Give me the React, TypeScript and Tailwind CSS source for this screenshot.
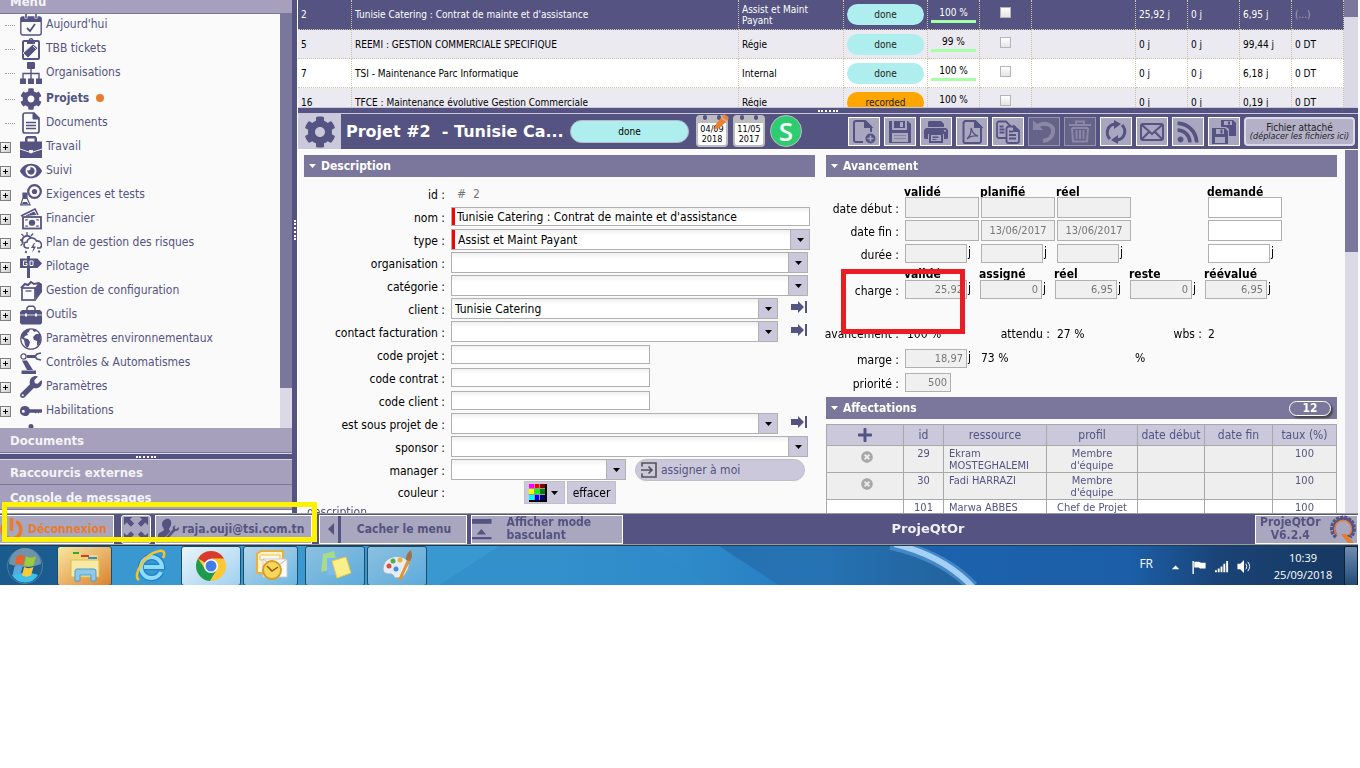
import React from 'react';
import { FaEye, FaWrench, FaPowerOff, FaPlus, FaCog, FaRss, FaTimesCircle } from 'react-icons/fa';

type IconProps = { className?: string };

/* ---------- ICONS ---------- */

const CalendarCheckIcon = ({ className }: IconProps) => (
    <svg viewBox="0 0 22 22" className={className} fill="none" stroke="currentColor">
        <rect x="0.8" y="3" width="20.4" height="18" rx="2" strokeWidth="1.4" />
        <path d="M1 3h20v5H1z" fill="currentColor" stroke="none" />
        <path d="M6 0.5v4M16 0.5v4" strokeWidth="3" stroke="#fafafa" />
        <path d="M6 0v4M16 0v4" strokeWidth="1.6" />
        <path d="M7 14l3 3 5-7" strokeWidth="1.8" />
    </svg>
);

const TicketBoardIcon = ({ className }: IconProps) => (
    <svg viewBox="0 0 22 22" className={className} fill="none" stroke="currentColor">
        <rect x="3" y="3" width="16" height="18" rx="1" strokeWidth="2" />
        <circle cx="11" cy="2.5" r="1.8" strokeWidth="1.4" />
        <path d="M7 3h8v3H7z" fill="currentColor" stroke="none" />
        <path d="M3 15L13 6l5 4-10 10z" fill="currentColor" stroke="#fafafa" strokeWidth="0.8" />
        <path d="M13 8l3 3" stroke="#fafafa" strokeWidth="0.8" />
    </svg>
);

const SitemapIcon = ({ className }: IconProps) => (
    <svg viewBox="0 0 22 22" className={className} fill="none" stroke="currentColor">
        <rect x="7" y="0" width="8" height="7" rx="1" fill="currentColor" stroke="none" />
        <path d="M11 6v11M3 17v-5.500h16V17" strokeWidth="1.400" />
        <path d="M0 16.500h6V22H0zM8 16.500h6V22H8zM16 16.500h6V22h-6z" fill="currentColor" stroke="none" />
    </svg>
);

const DocumentIcon = ({ className }: IconProps) => (
    <svg viewBox="0 0 22 22" className={className} fill="none" stroke="currentColor">
        <path d="M5 1h9l5 5v13a2 2 0 0 1-2 2H5a2 2 0 0 1-2-2V3a2 2 0 0 1 2-2z" strokeWidth="1.700" />
        <path d="M13 1v6h6z" fill="currentColor" />
        <path d="M6 10.500h10M6 13.500h10M6 16.500h10" strokeWidth="1.300" />
    </svg>
);

const BriefcaseIcon = ({ className }: IconProps) => (
    <svg viewBox="0 0 22 22" className={className} fill="currentColor">
        <path d="M5 6V2l1.500-2h9L17 2v4h-2.500V2.500h-7V6z" />
        <path d="M0 5.500h22v7l-9 3V14H9v1.500l-9-3z" />
        <path d="M0 13.500l8.500 2.700L11 17.500l2.500-1.300L22 13.500V22H0z" />
    </svg>
);

const TestsIcon = ({ className }: IconProps) => (
    <svg viewBox="0 0 22 22" className={className} fill="none" stroke="currentColor">
        <circle cx="14.500" cy="7.500" r="6.300" strokeWidth="2.200" />
        <circle cx="14.500" cy="7.500" r="2.600" fill="currentColor" stroke="none" />
        <path d="M3 9h4v5l3 6.800H0.700L3 14z" strokeWidth="1.200" fill="#fafafa" />
        <path d="M3 9h4v6H3zM3 18h4l1 2H2z" fill="currentColor" stroke="none" />
    </svg>
);

const MoneyIcon = ({ className }: IconProps) => (
    <svg viewBox="0 0 22 22" className={className} fill="none" stroke="currentColor">
        <path d="M1 8L15 1l3 6" strokeWidth="1.600" />
        <path d="M6 8l8-4 2 3" fill="currentColor" strokeWidth="1" />
        <rect x="3" y="9" width="18" height="11.500" strokeWidth="1.800" />
        <ellipse cx="12" cy="14.800" rx="3.200" ry="3" fill="currentColor" stroke="none" />
        <path d="M5 12h2v-1M19 12h-2v-1M5 18h2v1M19 18h-2v1" strokeWidth="1.200" />
    </svg>
);

const WeatherIcon = ({ className }: IconProps) => (
    <svg viewBox="0 0 22 22" className={className} fill="none" stroke="currentColor">
        <path d="M3 11.500A4.500 4.500 0 1 1 11 6" strokeWidth="2" />
        <path d="M7 3V0M3.500 4L1.500 2M11 4l2-2.500M2 8H0M2.500 12l-2 1.500" strokeWidth="1.300" />
        <path d="M9 16H7a3 3 0 0 1 0-6 5 5 0 0 1 9.500-1A4 4 0 0 1 20 16h-3" strokeWidth="1.600" />
        <path d="M14 11l-3 5h2.500L12 21l4-6.500h-2.500L15 11z" fill="currentColor" stroke="none" />
        <path d="M6.500 19l-1 2M19.500 18.500l-1 2" strokeWidth="1.800" />
    </svg>
);

const SignpostIcon = ({ className }: IconProps) => (
    <svg viewBox="0 0 22 22" className={className} fill="none" stroke="currentColor">
        <path d="M8.500 0v22" strokeWidth="3" />
        <path d="M0 2.500h17.500L22 7.500l-4.500 4.500H0z" fill="currentColor" stroke="none" />
        <path d="M7 5H3.500v4.500H7V7.500H5.500M10 5h3v4.500h-3z" stroke="#fafafa" strokeWidth="1" />
    </svg>
);

const BoxIcon = ({ className }: IconProps) => (
    <svg viewBox="0 0 22 22" className={className} fill="none" stroke="currentColor">
        <path d="M15 8l4-6 3 2v8l-6 8z" fill="currentColor" stroke="none" />
        <path d="M1 8l4-4 3 1 3-3 3 2 5-1" strokeWidth="2" />
        <rect x="2" y="8" width="13" height="12" strokeWidth="1.700" />
        <path d="M5.500 11h6" strokeWidth="1.300" />
    </svg>
);

const ToolboxIcon = ({ className }: IconProps) => (
    <svg viewBox="0 0 22 22" className={className} fill="none" stroke="currentColor">
        <path d="M7 6V4l1.500-1.700h5L15 4v2" strokeWidth="1.500" />
        <path d="M2 6h18l2 2v11l-1.500 1.500h-19L0 19V8z" fill="currentColor" stroke="none" />
        <path d="M0 11h22" stroke="#fafafa" strokeWidth="0.800" />
        <path d="M6 9.500v3M16 9.500v3" stroke="#fafafa" strokeWidth="2" />
    </svg>
);

const GlobeIcon = ({ className }: IconProps) => (
    <svg viewBox="0 0 22 22" className={className} fill="none" stroke="currentColor">
        <circle cx="11" cy="11" r="10.200" strokeWidth="1.200" />
        <path d="M2 6l4-4 4-1-1 3-2 1 1 2-3 1-1 2 4 1 2 3-1 4-2 2-2-3-1-5-3-2zM13 1l4 1-2 2-2-1zM20 6l-4 0-3 3 1 3 3 1 0 4 1 1 3-5z" fill="currentColor" stroke="none" />
    </svg>
);

const RobotArmIcon = ({ className }: IconProps) => (
    <svg viewBox="0 0 22 22" className={className} fill="none" stroke="currentColor">
        <circle cx="3.500" cy="4.500" r="2.600" strokeWidth="1.300" />
        <path d="M7 4.500h9" strokeWidth="3" />
        <path d="M21 1l-4 1-2 2.500L17 7l4 1" strokeWidth="1.700" />
        <path d="M2 8.500h5L13 18H7z" fill="currentColor" stroke="none" />
        <path d="M1.500 22v-3.500H16V22z" fill="currentColor" stroke="none" />
    </svg>
);

const KeyIcon = ({ className }: IconProps) => (
    <svg viewBox="0 0 22 22" className={className} fill="currentColor">
        <path fillRule="evenodd" d="M5 6a5 5 0 0 1 4.700 3.300H22V12l-1 1-1.500-.5-1 1-1.500-1-1.500 1-1-.8H9.700A5 5 0 1 1 5 6zM3.300 9.700a1.500 1.500 0 1 0 0 3 1.500 1.500 0 0 0 0-3z" />
    </svg>
);

const PersonIcon = ({ className }: IconProps) => (
    <svg viewBox="0 0 22 22" className={className} fill="currentColor">
        <circle cx="11" cy="2.500" r="2.500" />
        <circle cx="16" cy="6" r="2" />
    </svg>
);

const GotoIcon = ({ className }: IconProps) => (
    <svg viewBox="0 0 16 14" className={className} fill="currentColor">
        <path d="M0 4h7V1l6 6-6 6v-3H0zM14 1h2v12h-2z" />
    </svg>
);

const NewFileIcon = ({ className }: IconProps) => (
    <svg viewBox="0 0 24 24" className={className} fill="none" stroke="currentColor" strokeWidth="2">
        <path d="M11 22H4a2 2 0 0 1-2-2V3a2 2 0 0 1 2-2h9l6 6v5" />
        <path d="M13 1v6h6z" fill="currentColor" />
        <circle cx="18.500" cy="18.500" r="5" fill="currentColor" stroke="none" />
        <path d="M15.500 18.500h6M18.500 15.500v6" stroke="#a9a6bf" strokeWidth="1.600" />
    </svg>
);

const SaveIcon = ({ className }: IconProps) => (
    <svg viewBox="0 0 24 24" className={className} fill="currentColor">
        <path fillRule="evenodd" d="M1 1h3v9h15V1h1l3 3v19H1zM4 13v9h16v-9z" />
        <path fillRule="evenodd" d="M6 1h11v7H6zM12 2v5h3V2z" />
        <path d="M6 15h12v1H6zM6 18h12v1H6z" opacity="0.400" />
    </svg>
);

const PrintIcon = ({ className }: IconProps) => (
    <svg viewBox="0 0 24 24" className={className} fill="currentColor">
        <path fillRule="evenodd" d="M5 1h12l3 3v3H4V2z" />
        <path fillRule="evenodd" d="M2 8h20l2 2v8l-1 1h-3v-5H4v5H1l-1-1v-8zM20 10v1.500h2V10z" />
        <path fillRule="evenodd" d="M5 13h14v10H5zM7 15v6h10v-6z" />
        <path d="M8.500 16.500h6V18h-6zM8.500 19h4v1h-4z" />
    </svg>
);

const PdfIcon = ({ className }: IconProps) => (
    <svg viewBox="0 0 24 24" className={className} fill="none" stroke="currentColor" strokeWidth="2">
        <path d="M5 1h10l6 6v14a2 2 0 0 1-2 2H5a1.500 1.500 0 0 1-1.500-2V2.500z" />
        <path d="M15 1v6h6z" fill="currentColor" />
        <path d="M11 8c1.500 5 3 7 7 8-4-.5-8 0-11 3 3-3 4.500-7 4-11z" strokeWidth="1.300" />
    </svg>
);

const CopyIcon = ({ className }: IconProps) => (
    <svg viewBox="0 0 24 24" className={className} fill="none" stroke="currentColor" strokeWidth="1.800">
        <path d="M3 1.500h7l4 4V18H3a2 2 0 0 1-2-2V3.500a2 2 0 0 1 2-2z" />
        <path d="M3.500 6.500h4M3.500 9.500h5M3.500 12.500h5" />
        <path d="M12 6.500h6.500L23 11v10a2 2 0 0 1-2 2h-8.500a2 2 0 0 1-2-2V8z" fill="#a9a6bf" />
        <path d="M18 6.500V11h5z" fill="currentColor" />
        <path d="M13 11.500h4M13 15h7M13 18.500h7" />
    </svg>
);

const UndoIcon = ({ className }: IconProps) => (
    <svg viewBox="0 0 24 24" className={className} fill="none" stroke="currentColor">
        <path d="M5 6c8-5 17-1 16 6-.5 5-4 8-10 9" strokeWidth="4" />
        <path d="M1 0v10h10z" fill="currentColor" stroke="none" />
    </svg>
);

const TrashIcon = ({ className }: IconProps) => (
    <svg viewBox="0 0 24 24" className={className} fill="none" stroke="currentColor" strokeWidth="2">
        <path d="M1 5h22M8 4V1.500h8V4M4 8l1 13.500h14L20 8M4 8h16M8.500 10v9M12 10v9M15.500 10v9" />
    </svg>
);

const RefreshIcon = ({ className }: IconProps) => (
    <svg viewBox="0 0 24 24" className={className} fill="none" stroke="currentColor" strokeWidth="3">
        <path d="M6 19C1 14 3 5 11 4M18 5c5 5 3 14-5 15" />
        <path d="M10 0l7 4-7 5zM14 15v9l-7-4z" fill="currentColor" stroke="none" />
    </svg>
);

const MailIcon = ({ className }: IconProps) => (
    <svg viewBox="0 0 24 24" className={className} fill="none" stroke="currentColor" strokeWidth="2">
        <rect x="1" y="4" width="22" height="16" rx="2" />
        <path d="M2 5l10 9 10-9M2 19l7-7M22 19l-7-7" />
    </svg>
);

const MultiSaveIcon = ({ className }: IconProps) => (
    <svg viewBox="0 0 24 24" className={className} fill="currentColor">
        <path fillRule="evenodd" d="M9 0h12l3 3v13h-7V9l-3-2H9zM12 1v4h8V1zM16 1.500h2v3h-2z" />
        <path fillRule="evenodd" d="M0 8h13l3 3v13H0zM4 9v5h8V9zM3 17v6h10v-6zM8.500 9.500h2v4h-2z" />
    </svg>
);

const ExpandIcon = ({ className }: IconProps) => (
    <svg viewBox="0 0 28 28" className={className} fill="currentColor">
        <path d="M1 1h9L7.500 3.500 12 8 8.500 11.500 4 7 1 10zM27 1v9l-3-3-4.500 4.500L16 8l4.500-4.500L18 1zM1 27v-9l3 3 4.500-4.500L12 20l-4.500 4.500L10 27zM27 27h-9l2.500-2.500L16 20l3.500-3.500L24 21l3-3z" />
    </svg>
);

const UserWrenchIcon = ({ className }: IconProps) => (
    <svg viewBox="0 0 22 22" className={className} fill="currentColor">
        <path d="M8 1c4-1 6 2 5 6-.5 2-2 3-2 5l2 1-5 8H0v-4c1-3 4-3 6-5 0-2-2-3-2-6 0-3 2-4 4-5z" />
        <path d="M20 9l-2 2-1-1 1-3c-3 0-4 2-3.500 4L9 18c-2 0-2 2-1 3.500 1.500 1 3 0 3-1.500l6-6.500c3 0 4.500-1.500 4.500-4.500z" stroke="#a9a6bf" strokeWidth="0.800" />
    </svg>
);

const AssignIcon = ({ className }: IconProps) => (
    <svg viewBox="0 0 16 16" className={className} fill="none" stroke="#545454" strokeWidth="1.600">
        <path d="M1 4.500V1h14v14H1v-3.500M0 8h10.500M7.500 4.500L11 8l-3.500 3.500" />
    </svg>
);

/* ---------- SIDEBAR ---------- */

const menuItems = [
    { label: "Aujourd'hui", Icon: CalendarCheckIcon, leaf: true },
    { label: 'TBB tickets', Icon: TicketBoardIcon, leaf: true },
    { label: 'Organisations', Icon: SitemapIcon, leaf: true },
    { label: 'Projets', Icon: FaCog, leaf: true, active: true },
    { label: 'Documents', Icon: DocumentIcon, leaf: true },
    { label: 'Travail', Icon: BriefcaseIcon },
    { label: 'Suivi', Icon: FaEye },
    { label: 'Exigences et tests', Icon: TestsIcon },
    { label: 'Financier', Icon: MoneyIcon },
    { label: 'Plan de gestion des risques', Icon: WeatherIcon },
    { label: 'Pilotage', Icon: SignpostIcon },
    { label: 'Gestion de configuration', Icon: BoxIcon },
    { label: 'Outils', Icon: ToolboxIcon },
    { label: 'Paramètres environnementaux', Icon: GlobeIcon },
    { label: 'Contrôles & Automatismes', Icon: RobotArmIcon },
    { label: 'Paramètres', Icon: FaWrench },
    { label: 'Habilitations', Icon: KeyIcon },
];

const PaneTitle = ({ children }: { children: React.ReactNode }) => (
    <h2 className="h-[25px] shrink-0 border-b border-[#7b769c] bg-[#a6a0bc] pl-[10px] text-[13px] leading-[25px] font-bold text-[#f4f3f8]">
        {children}
    </h2>
);

const Sidebar = () => (
    <aside className="flex w-[292px] shrink-0 flex-col overflow-hidden">
        <div className="flex h-[14px] shrink-0 flex-col justify-end overflow-hidden">
            <PaneTitle>Menu</PaneTitle>
        </div>
        <div className="flex h-[414px] shrink-0 bg-[#fafafa]">
            <nav className="min-w-0 flex-1 overflow-hidden">
                {menuItems.map(({ label, Icon, leaf, active }) => (
                    <div key={label} className={`flex h-6 items-start text-[#545381] ${active ? 'mt-0.5' : ''}`}>
                        <span className="flex h-[22px] w-5 shrink-0 items-center">
                            {leaf ? (
                                <span className="ml-[5px] w-[10px] border-b border-dotted border-[#999999]" />
                            ) : (
                                <button aria-label={`Ouvrir ${label}`} className="flex h-[11px] w-[11px] items-center justify-center border border-[#808080] bg-gradient-to-br from-white to-[#cccccc] text-black">
                                    <svg viewBox="0 0 5 5" className="h-[5px] w-[5px]"><path d="M2 0h1v2h2v1H3v2H2V3H0V2h2z" /></svg>
                                </button>
                            )}
                        </span>
                        <Icon className="h-[22px] w-[22px] shrink-0" />
                        <a href="#" className={`ml-1 leading-[21px] whitespace-nowrap ${active ? 'font-bold' : ''}`}>{label}</a>
                        {active && <span className="mt-[6px] ml-[7px] h-2 w-2 rounded-full bg-[#e97b2c]" />}
                    </div>
                ))}
                <PersonIcon className="ml-5 h-[22px] w-[22px] text-[#545381]" />
            </nav>
            <div className="w-3 shrink-0 bg-[#dbd9e6]">
                <div className="h-[374px] bg-[#7b769c]" />
            </div>
        </div>
        <PaneTitle>Documents</PaneTitle>
        <div className="flex h-[7px] shrink-0 items-center justify-center border-y border-[#dbd9e6] bg-[#545381]">
            <span className="w-5 border-t-2 border-dotted border-white" />
        </div>
        <PaneTitle>Raccourcis externes</PaneTitle>
        <PaneTitle>Console de messages</PaneTitle>
    </aside>
);

/* ---------- PROJECT LIST ---------- */

const projects = [
    { id: 2, name: "Tunisie Catering : Contrat de mainte et d'assistance", type: 'Assist et Maint Payant', status: 'done', progress: 100, validated: '25,92 j', assigned: '0 j', real: '6,95 j', cost: '(...)', selected: true },
    { id: 5, name: 'REEMI : GESTION COMMERCIALE SPECIFIQUE', type: 'Régie', status: 'done', progress: 99, validated: '0 j', assigned: '0 j', real: '99,44 j', cost: '0 DT' },
    { id: 7, name: 'TSI - Maintenance Parc Informatique', type: 'Internal', status: 'done', progress: 100, validated: '0 j', assigned: '0 j', real: '6,18 j', cost: '0 DT' },
    { id: 16, name: 'TFCE : Maintenance évolutive Gestion Commerciale', type: 'Régie', status: 'recorded', progress: 100, validated: '0 j', assigned: '0 j', real: '0,19 j', cost: '0 DT' },
];

const cell = 'border-r border-b border-dotted border-[#cfc4a4] px-[3px] text-left';

const ProjectList = () => (
    <div className="flex h-[107px] shrink-0 overflow-hidden">
        <table className="min-w-0 flex-1 table-fixed border-separate border-spacing-0 text-[10px] leading-[11px]">
            <colgroup>
                <col className="w-[54px]" />
                <col />
                <col className="w-[105px]" />
                <col className="w-[84px]" />
                <col className="w-[52px]" />
                <col className="w-[52px]" />
                <col className="w-[104px]" />
                <col className="w-[52px]" />
                <col className="w-[52px]" />
                <col className="w-[52px]" />
                <col className="w-[52px]" />
            </colgroup>
            <tbody>
                {projects.map(p => (
                    <tr
                        key={p.id}
                        className={
                            p.selected
                                ? 'h-[30px] bg-[#545381] text-white'
                                : 'h-[29px] text-black odd:bg-white even:bg-[#ebeaf1]'
                        }
                    >
                        <td className={cell}>{p.id}</td>
                        <td className={cell}>{p.name}</td>
                        <td className={cell}>{p.type}</td>
                        <td className={cell}>
                            <span className={`block h-[21px] rounded-full text-center leading-[21px] text-[#222222] ${p.status === 'recorded' ? 'bg-[#ffa500]' : 'bg-[#afeeee]'}`}>
                                {p.status}
                            </span>
                        </td>
                        <td className={cell}>
                            <span className="block border-b-[3px] border-[#a6ffa6] pb-0.5 text-center">{p.progress} %</span>
                        </td>
                        <td className={`${cell} pb-1`}>
                            <input type="checkbox" aria-label={`Terminé ${p.id}`} className="mx-auto block h-[11px] w-[11px] appearance-none border border-[#b5b5b5] bg-gradient-to-b from-white to-[#e4e4e4]" />
                        </td>
                        <td className={cell} />
                        <td className={cell}>{p.validated}</td>
                        <td className={cell}>{p.assigned}</td>
                        <td className={cell}>{p.real}</td>
                        <td className={`${cell} ${p.selected ? 'text-[#a9a6bf]' : ''}`}>{p.cost}</td>
                    </tr>
                ))}
            </tbody>
        </table>
        <div className="w-[14px] shrink-0 bg-[#dbd9e6]">
            <div className="h-[17px] bg-[#7b769c]" />
        </div>
    </div>
);

/* ---------- TITLE BAR ---------- */

const tools = [
    { label: 'Nouveau', Icon: NewFileIcon },
    { label: 'Enregistrer', Icon: SaveIcon },
    { label: 'Imprimer', Icon: PrintIcon },
    { label: 'PDF', Icon: PdfIcon },
    { label: 'Copier', Icon: CopyIcon },
    { label: 'Annuler', Icon: UndoIcon, disabled: true },
    { label: 'Supprimer', Icon: TrashIcon, disabled: true },
    { label: 'Rafraîchir', Icon: RefreshIcon },
    { label: 'Email', Icon: MailIcon },
    { label: 'Abonnement', Icon: FaRss },
    { label: 'Mise à jour multiple', Icon: MultiSaveIcon },
];

const DateBadge = ({ day, year, edited }: { day: string; year: string; edited?: boolean }) => (
    <div className="relative mr-[5px] mb-0.5 h-8 w-8 shrink-0 rounded-[4px] border-2 border-t-8 border-[#bcbcc0] bg-white pt-px text-center text-[9px] leading-[10px] text-black">
        <span className="absolute -top-2 left-[5px] h-[5px] w-1 rounded-full bg-[#545381]" />
        <span className="absolute -top-2 right-[5px] h-[5px] w-1 rounded-full bg-[#545381]" />
        <div>{day}</div>
        <div>{year}</div>
        {edited && (
            <svg viewBox="0 0 16 16" className="absolute -top-[9px] -right-[3px] h-4 w-4" fill="#ee7f2d">
                <path d="M11 0l5 4-2 3-5-4zM8 4l5 4-7 6-5 2 2-6z" />
            </svg>
        )}
    </div>
);

const TitleBar = () => (
    <div className="flex h-9 shrink-0 items-center border-t border-[#cac8da] bg-[#545381]">
        <div className="flex h-9 w-[43px] shrink-0 items-center justify-center bg-[#cac8da]">
            <FaCog className="h-8 w-8 text-[#545381]" />
        </div>
        <h1 className="ml-[5px] w-[224px] shrink-0 font-[DejaVu_Sans,sans-serif] text-[16px] font-bold whitespace-pre text-white">Projet #2  - Tunisie Ca...</h1>
        <span className="mr-[7px] h-[23px] w-[119px] shrink-0 rounded-full border border-[#b8b8c8] bg-[#afeeee] text-center text-[10px] leading-[21px] text-black">done</span>
        <DateBadge day="04/09" year="2018" edited />
        <DateBadge day="11/05" year="2017" />
        <span className="mb-0.5 flex h-8 w-8 shrink-0 items-center justify-center rounded-full border border-[#bcbcc0] bg-[#2ecc71] font-[Open_Sans,sans-serif] text-[26px] leading-none font-semibold text-white">S</span>
        <div className="ml-auto flex gap-1">
            {tools.map(({ label, Icon, disabled }) => (
                <button
                    key={label}
                    title={label}
                    disabled={disabled}
                    className={`flex h-[29px] w-8 items-center justify-center border ${disabled ? 'border-[#9694ac] bg-[#656388] text-[#8a88a5]' : 'border-white bg-[#a9a6bf] text-[#545381]'}`}
                >
                    <Icon className="h-6 w-6" />
                </button>
            ))}
        </div>
        <button className="mr-[3px] ml-1 flex h-[29px] w-[111px] flex-col items-center justify-center rounded-[4px] border-2 border-[#dbd9e6] bg-[#b3b0c8] text-[10px] leading-[9px] whitespace-nowrap text-[#222222]">
            Fichier attaché
            <i className="text-[9px]">(déplacer les fichiers ici)</i>
        </button>
    </div>
);

/* ---------- FORM HELPERS ---------- */

const SectionTitle = ({ title, count }: { title: string; count?: number }) => (
    <h2 className="flex h-[22px] items-center bg-[#7b769c] pl-[5px] font-bold text-white">
        <svg viewBox="0 0 7 4" className="mr-[5px] h-1 w-[7px]" fill="white"><path d="M0 0h7L3.500 4z" /></svg>
        {title}
        {count !== undefined && (
            <span className="mr-[6px] ml-auto h-[15px] w-[42px] rounded-full border border-white text-center leading-[13px] shadow-[2px_2px_2px_#444444]">{count}</span>
        )}
    </h2>
);

const Row = ({ label, id, children }: { label: string; id?: string; children?: React.ReactNode }) => (
    <div className="flex h-[23px] items-center">
        <label htmlFor={id} className="w-[141px] shrink-0 pt-[3px] text-right">{label} :</label>
        <div className="ml-[6px] flex min-w-0 flex-1 items-center">{children}</div>
    </div>
);

const boxed = 'border border-[#b0b0b0] bg-gradient-to-b from-[#f0f0f0] via-white via-30% to-white';

const SelectBox = ({ id, value = '', required, className }: { id: string; value?: string; required?: boolean; className: string }) => (
    <div className={`flex h-[21px] ${boxed} ${className}`}>
        {required && <span className="w-[3px] shrink-0 bg-[#ff0000]" />}
        <select id={id} defaultValue={value} className="min-w-0 flex-1 appearance-none pl-[3px] outline-none">
            <option>{value}</option>
        </select>
        <span className="pointer-events-none flex w-[19px] shrink-0 items-center justify-center border-l border-[#b0b0b0] bg-[#cac8da]">
            <svg viewBox="0 0 7 4" className="h-1 w-[7px]"><path d="M0 0h7L3.500 4z" /></svg>
        </span>
    </div>
);

const Goto = () => (
    <button type="button" aria-label="Aller à l'élément" className="ml-[13px] pb-[3px]">
        <GotoIcon className="h-[14px] w-4 text-[#545381]" />
    </button>
);

/* ---------- DESCRIPTION ---------- */

const palette = ['#ff00ff', '#ff0000', '#800000', '#ffff00', '#00ff00', '#008000', '#00ffff', '#0000ff', '#000080'];

const Description = () => (
    <section className="min-w-0 flex-1">
        <SectionTitle title="Description" />
        <form className="pt-[5px]">
            <Row label="id"><span className="pl-[6px] whitespace-pre text-[#777777]">#  2</span></Row>
            <Row label="nom" id="nom">
                <div className={`flex h-[19px] w-[359px] ${boxed}`}>
                    <span className="w-[3px] shrink-0 bg-[#ff0000]" />
                    <div className="flex min-w-0 flex-1 items-center">
                        <input id="nom" autoFocus className="h-full w-full min-w-0 pl-0.5 outline-none" defaultValue="Tunisie Catering : Contrat de mainte et d'assistance" />
                    </div>
                </div>
            </Row>
            <Row label="type" id="type"><SelectBox id="type" value="Assist et Maint Payant" required className="w-[359px]" /></Row>
            <Row label="organisation" id="organisation"><SelectBox id="organisation" className="w-[357px]" /></Row>
            <Row label="catégorie" id="categorie"><SelectBox id="categorie" className="w-[357px]" /></Row>
            <Row label="client" id="client"><SelectBox id="client" value="Tunisie Catering" className="w-[327px]" /><Goto /></Row>
            <Row label="contact facturation" id="contact"><SelectBox id="contact" className="w-[327px]" /><Goto /></Row>
            <Row label="code projet" id="code-projet"><input id="code-projet" className={`h-[19px] w-[199px] ${boxed}`} /></Row>
            <Row label="code contrat" id="code-contrat"><input id="code-contrat" className={`h-[19px] w-[199px] ${boxed}`} /></Row>
            <Row label="code client" id="code-client"><input id="code-client" className={`h-[19px] w-[199px] ${boxed}`} /></Row>
            <Row label="est sous projet de" id="parent"><SelectBox id="parent" className="w-[327px]" /><Goto /></Row>
            <Row label="sponsor" id="sponsor"><SelectBox id="sponsor" className="w-[357px]" /></Row>
            <Row label="manager" id="manager">
                <SelectBox id="manager" className="w-[175px]" />
                <button type="button" className="ml-[9px] flex h-[22px] w-[170px] items-center rounded-full border border-[#c0bec8] bg-[#cac8da] pl-[5px] text-[#545381]">
                    <AssignIcon className="mr-1 h-4 w-4" />
                    assigner à moi
                </button>
            </Row>
            <div className="flex h-[23px] items-center">
                <span className="w-[141px] shrink-0 pt-px text-right">couleur :</span>
                <button type="button" aria-label="Choisir une couleur" className="ml-[79px] flex h-[23px] w-[41px] items-center gap-1 border border-[#c0bec8] bg-[#cac8da] pl-1">
                    <span className="grid h-[18px] w-[18px] grid-cols-3 gap-px border-r-2 border-b-2 border-black bg-[#999999]">
                        {palette.map(c => <span key={c} style={{ backgroundColor: c }} />)}
                    </span>
                    <svg viewBox="0 0 7 4" className="h-1 w-[7px]"><path d="M0 0h7L3.500 4z" /></svg>
                </button>
                <button type="button" className="ml-0.5 h-[23px] w-[49px] border border-[#c0bec8] bg-[#cac8da]">effacer</button>
            </div>
            <div className="pl-[3px] leading-[16px] text-[#545381]">description</div>
        </form>
    </section>
);

/* ---------- AVANCEMENT ---------- */

const Box = ({ label, value, width = 'w-[74px]', height = 'h-[21px]', align = 'text-center', editable, unit }: {
    label: string; value?: string; width?: string; height?: string; align?: string; editable?: boolean; unit?: string;
}) => (
    <div className="flex pl-[6px]">
        <input
            aria-label={label}
            readOnly={!editable}
            defaultValue={value}
            className={`${width} ${height} ${align} border border-[#b0b0b0] px-[3px] text-[11px] text-[#777777] ${editable ? 'bg-white' : 'bg-[#f0f0f0]'}`}
        />
        {unit && <span className="ml-px leading-[16px]">{unit}</span>}
    </div>
);

const DayBox = ({ label, value, editable }: { label: string; value?: string; editable?: boolean }) => (
    <Box label={label} value={value} editable={editable} width="w-[62px]" height="h-[19px]" align="text-right" unit="j" />
);

const wide = 'grid grid-cols-[73px_76px_76px_151px_1fr] items-center';
const narrow = 'grid grid-cols-[73px_75px_75px_75px_75px_1fr] items-center';

const RightLabel = ({ children }: { children: React.ReactNode }) => <span className="pt-[3px] text-right whitespace-nowrap">{children} :</span>;

const Avancement = () => (
    <div className="relative">
        <SectionTitle title="Avancement" />
        <div className="pt-[6px]">
            <div className={`${wide} h-[13px] font-bold`}>
                <span />
                <span className="pl-[5px]">validé</span>
                <span className="pl-[5px]">planifié</span>
                <span className="pl-[5px]">réel</span>
                <span className="pl-[5px]">demandé</span>
            </div>
            <div className={`${wide} h-[23px]`}>
                <RightLabel>date début</RightLabel>
                <Box label="Début validé" />
                <Box label="Début planifié" />
                <Box label="Début réel" />
                <Box label="Début demandé" editable />
            </div>
            <div className={`${wide} h-[23px]`}>
                <RightLabel>date fin</RightLabel>
                <Box label="Fin validée" />
                <Box label="Fin planifiée" value="13/06/2017" />
                <Box label="Fin réelle" value="13/06/2017" />
                <Box label="Fin demandée" editable />
            </div>
            <div className={`${wide} h-[23px]`}>
                <RightLabel>durée</RightLabel>
                <DayBox label="Durée validée" />
                <DayBox label="Durée planifiée" />
                <DayBox label="Durée réelle" />
                <DayBox label="Durée demandée" editable />
            </div>
            <div className={`${narrow} h-[13px] font-bold`}>
                <span />
                <span className="pl-[5px]">validé</span>
                <span className="pl-[5px]">assigné</span>
                <span className="pl-[5px]">réel</span>
                <span className="pl-[5px]">reste</span>
                <span className="pl-[5px]">réévalué</span>
            </div>
            <div className={`${narrow} h-[23px]`}>
                <RightLabel>charge</RightLabel>
                <DayBox label="Charge validée" value="25,92" />
                <DayBox label="Charge assignée" value="0" />
                <DayBox label="Charge réelle" value="6,95" />
                <DayBox label="Reste" value="0" />
                <DayBox label="Réévalué" value="6,95" />
            </div>
            <div className={`${wide} mt-[21px] h-6`}>
                <span className="flex justify-end text-right whitespace-nowrap">avancement :</span>
                <span className="pl-2">100 %</span>
                <span className="pr-px text-right">attendu :</span>
                <span className="flex justify-between pl-[6px]"><span>27 %</span><span>wbs :</span></span>
                <span className="pl-[6px]">2</span>
            </div>
            <div className={`${wide} h-6`}>
                <RightLabel>marge</RightLabel>
                <DayBox label="Marge" value="18,97" />
                <span className="pl-[6px]">73 %</span>
                <span className="pl-[84px]">%</span>
            </div>
            <div className={`${wide} h-6`}>
                <RightLabel>priorité</RightLabel>
                <Box label="Priorité" value="500" width="w-[46px]" height="h-[19px]" align="text-right" />
            </div>
        </div>
        {/* red highlight drawn over the workload figures */}
        <div className="pointer-events-none absolute top-[114px] left-[15px] h-[65px] w-[124px] border-[5px] border-[#ed1c24]" />
    </div>
);

const assignments = [
    { id: 29, name: 'Ekram MOSTEGHALEMI', profile: "Membre d'équipe", rate: 100, closable: true },
    { id: 30, name: 'Fadi HARRAZI', profile: "Membre d'équipe", rate: 100, closable: true },
    { id: 101, name: 'Marwa ABBES', profile: 'Chef de Projet', rate: 100, closable: false },
];

const line = 'border border-[#a8a8a8]';

const Affectations = () => (
    <div className="mt-[3px]">
        <SectionTitle title="Affectations" count={12} />
        <table className="mt-[5px] w-full table-fixed border-collapse text-center text-[#545381]">
            <colgroup>
                <col className="w-[77px]" />
                <col className="w-[40px]" />
                <col />
                <col className="w-[91px]" />
                <col className="w-[67px]" />
                <col className="w-[68px]" />
                <col className="w-[64px]" />
            </colgroup>
            <thead>
                <tr className="h-[21px] bg-[#cac8da] whitespace-nowrap">
                    <th className={line}><button aria-label="Ajouter" className="block w-full"><FaPlus className="mx-auto h-4 w-4" /></button></th>
                    <th className={`${line} font-normal`}>id</th>
                    <th className={`${line} font-normal`}>ressource</th>
                    <th className={`${line} font-normal`}>profil</th>
                    <th className={`${line} font-normal`}>date début</th>
                    <th className={`${line} font-normal`}>date fin</th>
                    <th className={`${line} font-normal`}>taux (%)</th>
                </tr>
            </thead>
            <tbody className="align-top text-[11px] leading-[12px]">
                {assignments.map(a => (
                    <tr key={a.id} className={`h-[27px] ${a.closable ? 'bg-[#eeeeee]' : 'bg-white'}`}>
                        <td className={line}>
                            {a.closable && <button aria-label={`Fermer ${a.id}`} className="mt-[5px] ml-1"><FaTimesCircle className="h-3 w-3 text-[#a8a8a8]" /></button>}
                        </td>
                        <td className={`${line} pt-0.5`}>{a.id}</td>
                        <td className={`${line} px-[5px] pt-0.5 text-left`}>{a.name}</td>
                        <td className={`${line} px-[9px] pt-0.5`}>{a.profile}</td>
                        <td className={line} />
                        <td className={line} />
                        <td className={`${line} pt-0.5`}>{a.rate}</td>
                    </tr>
                ))}
            </tbody>
        </table>
    </div>
);

/* ---------- STATUS BAR & TASKBAR ---------- */

const barButton = 'flex h-[29px] items-center border border-white bg-[#a9a6bf] font-bold text-[#545381]';

const StatusBar = () => (
    <footer className="flex h-8 shrink-0 items-center border-y border-[#9b9b9b] bg-[#545381]">
        <button className={`${barButton} w-[114px] shrink-0 border-l-0`}>
            <FaPowerOff className="mr-[5px] h-[23px] w-[23px] text-[#e97b2c]" />
            <span className="text-[#e97b2c]">Déconnexion</span>
        </button>
        <button aria-label="Plein écran" className={`${barButton} ml-[7px] w-[30px] shrink-0 justify-center rounded-[3px]`}>
            <ExpandIcon className="h-[26px] w-[26px]" />
        </button>
        <button className={`${barButton} ml-1 w-[157px] shrink-0 pl-0.5`}>
            <UserWrenchIcon className="mr-0.5 h-[22px] w-[22px] shrink-0" />
            raja.ouji@tsi.com.tn
        </button>
        <button className={`${barButton} ml-[7px] w-[148px] shrink-0`}>
            <svg viewBox="0 0 22 27" className="h-[27px] w-[22px]" fill="currentColor"><path d="M14 7v12L8 13zM18 0h3v27h-3z" /></svg>
            <span className="flex-1 text-center">Cacher le menu</span>
        </button>
        <button className={`${barButton} ml-1 w-[152px] shrink-0`}>
            <svg viewBox="0 0 25 27" className="h-[27px] w-[25px]" fill="currentColor"><path d="M0 0h25v6H0zM6 20l6-7 6 7zM0 23h25v3H0z" /></svg>
            <span className="ml-[15px] text-left leading-[13px]">Afficher mode basculant</span>
        </button>
        <strong className="min-w-0 flex-1 pr-[22px] text-center font-[DejaVu_Sans,sans-serif] text-[13px] text-[#f0eff5]">ProjeQtOr</strong>
        <a href="#" className={`${barButton} w-[103px] shrink-0 pl-1`}>
            <span className="text-center leading-[13px]">ProjeQtOr<br />V6.2.4</span>
            <svg viewBox="0 0 28 28" className="ml-auto h-7 w-7" fill="none">
                <path d="M7 22A11 11 0 1 1 21 22" stroke="#545381" strokeWidth="4" strokeDasharray="3 1" />
                <path d="M8 20A9.500 9.500 0 1 1 18 22" stroke="#545381" strokeWidth="2.500" />
                <path d="M8 20A8.500 8.500 0 1 1 20 20" stroke="#e97b2c" strokeWidth="1.500" />
                <circle cx="14" cy="14" r="7.500" fill="#a9a6bf" />
                <path d="M12 19l5 0 8 9h-6z" fill="#e97b2c" />
            </svg>
        </a>
    </footer>
);

const StartOrb = () => (
    <svg viewBox="0 0 38 38" className="h-[38px] w-[38px]">
        <circle cx="19" cy="19" r="17.500" fill="#1d5c8c" stroke="#4d7fa3" />
        <path d="M3 17a16 16 0 0 1 32 0c-9 4-22 4-32 0z" fill="#6f93a8" />
        <path d="M6 28a15 15 0 0 0 26 0c-7-3-19-3-26 0z" fill="#3fc0ea" />
        <path d="M11 9c3-1.500 5-1.500 8 0l-2 9c-3-1.500-5-1.500-8 0z" fill="#e8622c" />
        <path d="M20 9.500c3 1.500 6 1.500 10 0l-2.500 9c-3 1.500-6 1.500-9.500 0z" fill="#9ccb3c" />
        <path d="M8.500 19.500c3-1.500 5-1.500 8 0l-2 8.500c-3-1.500-5-1.500-8 0z" fill="#5aa8e0" />
        <path d="M18 20c3 1.500 6 1.500 9.500 0L25 28.500c-3 1.500-6 1.500-9 0z" fill="#fbc93b" />
    </svg>
);

const ExplorerLogo = () => (
    <svg viewBox="0 0 34 34" className="h-[34px] w-[34px]">
        <path d="M3 8V3h9l2 3h16v22H3z" fill="#f0d878" />
        <path d="M5 3h6v2H5z" fill="#2faa3a" />
        <path d="M13 6h8v2h-8z" fill="#d93a2b" />
        <path d="M20 8h9v2h-9z" fill="#2c8fd9" />
        <path d="M3 11h28v17H3z" fill="#f8e9a4" stroke="#dcbc52" />
        <path d="M7 32V22a2 2 0 0 1 2-2h17a2 2 0 0 1 2 2v10h-5v-6H12v6z" fill="#8fc9ea" stroke="#4b9fcd" />
    </svg>
);

const IeLogo = () => (
    <svg viewBox="0 0 34 34" className="h-[34px] w-[34px]" fill="none">
        <path d="M28 23a10.500 10.500 0 1 1 1-5H11" stroke="#1f83cb" strokeWidth="6.500" />
        <path d="M28 23a10.500 10.500 0 1 1 1-5H11" stroke="#8edcf9" strokeWidth="4" />
        <path d="M6 31C-1 27 11 5 26 2c6-1 6 3 4 7" stroke="#f5c52c" strokeWidth="2.500" />
    </svg>
);

const ChromeLogo = () => (
    <svg viewBox="0 0 32 32" className="h-8 w-8">
        <circle cx="16" cy="16" r="15" fill="#fcc934" />
        <path d="M16 16L3 8.500A15 15 0 0 1 29 8.500H16z" fill="#d93a2f" />
        <path d="M3 8.500A15 15 0 0 0 15 31l7-12H10z" fill="#1e9a50" />
        <circle cx="16" cy="16" r="7" fill="white" />
        <circle cx="16" cy="16" r="5.500" fill="#3f7ee8" />
    </svg>
);

const OutlookLogo = () => (
    <svg viewBox="0 0 34 34" className="h-[34px] w-[34px]" fill="none">
        <path d="M3 5l4-3h22v22H3z" fill="#fff3cc" stroke="#e8b040" strokeWidth="2" />
        <path d="M6 6h20v5H6z" fill="#fdf8e8" stroke="#f1c04b" />
        <path d="M9 10h24v18H9z" fill="#fdfdfd" stroke="#c9c9c9" />
        <path d="M9 10l12 9 12-9" stroke="#b9b9b9" />
        <circle cx="18" cy="21" r="9" fill="#f9d75a" stroke="#dc9c1c" strokeWidth="2" />
        <path d="M13 17l5 5 6-4" stroke="#8a5a00" strokeWidth="1.500" />
    </svg>
);

const NotesLogo = () => (
    <svg viewBox="0 0 34 34" className="h-[34px] w-[34px]">
        <path d="M5 5l11-3 4 17-17 4z" fill="#a6dc8a" />
        <path d="M9 9h15v17H9z" fill="#7db8ee" />
        <path d="M14 12l14-4 5 16-14 5z" fill="#fbf08b" stroke="#e3cc3e" />
    </svg>
);

const PaintLogo = () => (
    <svg viewBox="0 0 34 34" className="h-[34px] w-[34px]">
        <path d="M3 20C3 10 13 6 21 8s10 8 6 14c-2 4-4 7-10 7-4 0-3-4-6-4s-8 0-8-5z" fill="#e4edf5" stroke="#8fb0c8" />
        <circle cx="9" cy="17" r="2.500" fill="#e04a3a" />
        <circle cx="13" cy="12" r="2.500" fill="#4bb04b" />
        <circle cx="20" cy="11" r="2.500" fill="#f0b030" />
        <circle cx="16" cy="20" r="2.500" fill="#3f8fdc" />
        <path d="M18 31l9-20 3 1-9 19z" fill="#e8912c" />
        <path d="M26 11c0-5 2-8 5-10 1 4 2 7-1 11z" fill="#a0714a" />
    </svg>
);

const taskButton = 'flex h-10 items-center justify-center rounded-[3px] border border-[#1d4d6c]';

const Taskbar = () => (
    <div className="relative flex h-10 items-center overflow-hidden border-t border-[#1c3c58] bg-gradient-to-r from-[#1a5b8e] via-[#2673b4] via-60% to-[#16375f] font-[Open_Sans,sans-serif] text-[12px] text-white">
        <svg viewBox="0 0 1360 40" preserveAspectRatio="none" className="absolute inset-0 h-full w-full">
            <defs>
                <linearGradient id="sky">
                    <stop offset="0" stopColor="#3a98d0" />
                    <stop offset="0.7" stopColor="#3a98d0" />
                    <stop offset="1" stopColor="#2780c4" />
                </linearGradient>
                <linearGradient id="dusk">
                    <stop offset="0" stopColor="#1c62ae" />
                    <stop offset="0.5" stopColor="#1c5fa8" />
                    <stop offset="0.7" stopColor="#1a4376" />
                    <stop offset="1" stopColor="#16375f" />
                </linearGradient>
            </defs>
            <path d="M110 0h610l60 40H60z" fill="url(#sky)" />
            <path d="M440 40l60-40h150l60 40z" fill="#2f8ac8" opacity="0.600" />
            <path d="M900 0h460v40H976Q950 12 900 0z" fill="url(#dusk)" />
            <path d="M892 -2Q945 10 974 42" stroke="#5a9fdc" strokeWidth="12" fill="none" opacity="0.600" />
            <path d="M896 -2Q945 10 974 42" stroke="#a5d0f5" strokeWidth="6" fill="none" />
        </svg>
        <div className="relative flex w-full items-center">
            <button aria-label="Démarrer" className="ml-1.5 w-[51px]"><StartOrb /></button>
            <button aria-label="Explorateur" className={`${taskButton} w-[55px] bg-gradient-to-br from-[#f7e7a0] to-[#d9822c]`}><ExplorerLogo /></button>
            <button aria-label="Internet Explorer" className="ml-2 flex h-10 w-[59px] items-center justify-center"><IeLogo /></button>
            <button aria-label="Chrome" className={`${taskButton} ml-[2px] w-[60px] bg-gradient-to-br from-[#eaf5fb] to-[#9fd0ee]`}><ChromeLogo /></button>
            <button aria-label="Outlook" className={`${taskButton} ml-[2px] w-[55px] bg-gradient-to-br from-[#b5d6e8] to-[#6cb6e2]`}><OutlookLogo /></button>
            <button aria-label="Pense-bêtes" className={`${taskButton} ml-[7px] w-[60px] bg-gradient-to-br from-[#8cc0df] to-[#5cabdc]`}><NotesLogo /></button>
            <button aria-label="Paint" className={`${taskButton} ml-[2px] w-[60px] bg-gradient-to-br from-[#8cc0df] to-[#5cabdc]`}><PaintLogo /></button>
            <span className="mb-1 ml-auto">FR</span>
            <svg viewBox="0 0 90 16" className="ml-4 h-4 w-[90px] pt-px" fill="white">
                <path d="M0 11l4-4 4 4zM22 2h1.500v14H22zM24 3h5l2 1h5v6h-6l-1-1h-5z" />
                <path d="M46 12h2v2h-2zM49 10h2v4h-2zM52 8h2v6h-2zM55 5h2v9h-2zM58 2h2v12h-2z" />
                <path d="M70 5h3l4-4v14l-4-4h-3z" />
                <path d="M79 5q2 3 0 6M81 3q4 5 0 10" fill="none" stroke="white" />
            </svg>
            <div className="ml-3 w-[64px] text-center text-[11px] leading-[17px]">10:39<br />25/09/2018</div>
            <div className="ml-[9px] h-10 w-[14px] rounded-[2px] border border-[#0d2038] bg-gradient-to-b from-[#6f8db0] to-[#234a78]" />
        </div>
    </div>
);

/* ---------- PAGE ---------- */

const App: React.FC = () => {
    return (
        <div className="min-h-screen bg-white pr-0.5 font-[DejaVu_Sans_Condensed,DejaVu_Sans,sans-serif] text-[12px]">
            <div className="relative">
                <div className="flex h-[513px] overflow-hidden">
                    <Sidebar />
                    <div className="flex w-[5px] shrink-0 flex-col items-center bg-[#545381] pt-[220px]">
                        <span className="h-5 border-l-2 border-dotted border-white" />
                    </div>
                    <main className="ml-px flex min-w-0 flex-1 flex-col">
                        <ProjectList />
                        <div className="flex h-[6px] shrink-0 items-center justify-center border-t border-[#cac8da] bg-[#545381]">
                            <span className="w-5 border-t-2 border-dotted border-white" />
                        </div>
                        <TitleBar />
                        <div className="flex min-h-0 flex-1 border-t border-white bg-[#fafafa]">
                            <div className="flex min-w-0 flex-1 gap-[11px] pt-[5px] pr-2 pl-[6px]">
                                <Description />
                                <section className="min-w-0 flex-1">
                                    <Avancement />
                                    <Affectations />
                                </section>
                            </div>
                            <div className="w-[13px] shrink-0 bg-[#dbd9e6]">
                                <div className="h-[102px] bg-[#7b769c]" />
                            </div>
                        </div>
                    </main>
                </div>
                <StatusBar />
                {/* yellow highlight drawn over the session buttons */}
                <div className="pointer-events-none absolute top-[502px] left-0.5 h-[40px] w-[315px] border-[5px] border-[#fff200]" />
            </div>
            <Taskbar />
        </div>
    );
};

export default App;
